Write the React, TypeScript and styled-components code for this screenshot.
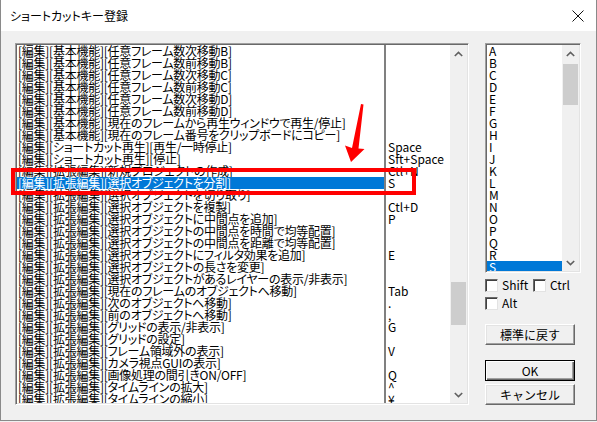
import React from 'react';
import styled, { createGlobalStyle } from 'styled-components';

const GlobalStyle = createGlobalStyle`
  html, body {
    margin: 0;
    padding: 0;
    background: #f0f0f0;
  }
  body {
    font-family: "Noto Sans CJK JP", "Liberation Sans", sans-serif;
    color: #000;
  }
`;

const shortcuts: [string, string][] = [
  ['[編集][基本機能][任意フレーム数次移動B]', ''],
  ['[編集][基本機能][任意フレーム数前移動B]', ''],
  ['[編集][基本機能][任意フレーム数次移動C]', ''],
  ['[編集][基本機能][任意フレーム数前移動C]', ''],
  ['[編集][基本機能][任意フレーム数次移動D]', ''],
  ['[編集][基本機能][任意フレーム数前移動D]', ''],
  ['[編集][基本機能][現在のフレームから再生ウィンドウで再生/停止]', ''],
  ['[編集][基本機能][現在のフレーム番号をクリップボードにコピー]', ''],
  ['[編集][ショートカット再生][再生/一時停止]', 'Space'],
  ['[編集][ショートカット再生][停止]', 'Sft+Space'],
  ['[編集][拡張編集][新規プロジェクトの作成]', 'Ctl+N'],
  ['[編集][拡張編集][選択オブジェクトを分割]', 'S'],
  ['[編集][拡張編集][選択オブジェクトを切り取り]', ''],
  ['[編集][拡張編集][選択オブジェクトを複製]', 'Ctl+D'],
  ['[編集][拡張編集][選択オブジェクトに中間点を追加]', 'P'],
  ['[編集][拡張編集][選択オブジェクトの中間点を時間で均等配置]', ''],
  ['[編集][拡張編集][選択オブジェクトの中間点を距離で均等配置]', ''],
  ['[編集][拡張編集][選択オブジェクトにフィルタ効果を追加]', 'E'],
  ['[編集][拡張編集][選択オブジェクトの長さを変更]', ''],
  ['[編集][拡張編集][選択オブジェクトがあるレイヤーの表示/非表示]', ''],
  ['[編集][拡張編集][現在のフレームのオブジェクトへ移動]', 'Tab'],
  ['[編集][拡張編集][次のオブジェクトへ移動]', '.'],
  ['[編集][拡張編集][前のオブジェクトへ移動]', ','],
  ['[編集][拡張編集][グリッドの表示/非表示]', 'G'],
  ['[編集][拡張編集][グリッドの設定]', ''],
  ['[編集][拡張編集][フレーム領域外の表示]', 'V'],
  ['[編集][拡張編集][カメラ視点GUIの表示]', ''],
  ['[編集][拡張編集][画像処理の間引きON/OFF]', 'Q'],
  ['[編集][拡張編集][タイムラインの拡大]', '^'],
  ['[編集][拡張編集][タイムラインの縮小]', '¥'],
];

const SELECTED_ROW = 11;
const letters = 'ABCDEFGHIJKLMNOPQRS'.split('');

const Chevron: React.FC<{ down?: boolean }> = ({ down }) => (
  <svg width="9" height="6" viewBox="0 0 9 6">
    <polyline
      points={down ? '0.8,1 4.5,4.6 8.2,1' : '0.8,5 4.5,1.4 8.2,5'}
      fill="none"
      stroke="#606060"
      strokeWidth="1.6"
    />
  </svg>
);

const App: React.FC = () => {
  return (
    <>
      <GlobalStyle />
      <Window>
        <TitleBar>
          <Title>ショートカットキー登録</Title>
          <CloseButton>
            <svg width="12" height="12" viewBox="0 0 12 12">
              <path d="M0.5 0.5 L11.5 11.5 M11.5 0.5 L0.5 11.5" stroke="#111" strokeWidth="1" />
            </svg>
          </CloseButton>
        </TitleBar>

        <Body>
          <ShortcutList>
            <ListRows>
              {shortcuts.map(([name, key], i) => (
                <ListRow key={i}>
                  <NameCell $selected={i === SELECTED_ROW}>{name}</NameCell>
                  <KeyCell>{key}</KeyCell>
                </ListRow>
              ))}
            </ListRows>
            <ScrollBar>
              <ScrollArrow>
                <Chevron />
              </ScrollArrow>
              <ScrollTrack>
                <ScrollThumb $top={220} $height={43} />
              </ScrollTrack>
              <ScrollArrow>
                <Chevron down />
              </ScrollArrow>
            </ScrollBar>
          </ShortcutList>

          <SidePanel>
            <KeyList>
              <KeyItems>
                {letters.map((l) => (
                  <KeyItem key={l} $selected={l === 'S'}>
                    {l}
                  </KeyItem>
                ))}
              </KeyItems>
              <ScrollBar>
                <ScrollArrow>
                  <Chevron />
                </ScrollArrow>
                <ScrollTrack>
                  <ScrollThumb $top={2} $height={41} />
                </ScrollTrack>
                <ScrollArrow>
                  <Chevron down />
                </ScrollArrow>
              </ScrollBar>
            </KeyList>

            <CheckRow>
              <CheckItem>
                <CheckBox />
                Shift
              </CheckItem>
              <CheckItem>
                <CheckBox />
                Ctrl
              </CheckItem>
            </CheckRow>
            <CheckRow>
              <CheckItem>
                <CheckBox />
                Alt
              </CheckItem>
            </CheckRow>

            <PushButton $gap={14}>標準に戻す</PushButton>
            <PushButton $gap={15} $default>
              OK
            </PushButton>
            <PushButton $gap={3}>キャンセル</PushButton>
          </SidePanel>
        </Body>

        <Highlight />
        <Arrow viewBox="340 100 30 70" width="30" height="70">
          <polygon points="360,104 362.5,104.5 357.5,148.5 363.5,149 350,162 344,145.5 351,148" fill="#ff0000" />
        </Arrow>
      </Window>
    </>
  );
};

const Window = styled.div`
  position: relative;
  width: 597px;
  height: 421px;
  box-sizing: border-box;
  background: #f0f0f0;
  border: 1px solid #8a8a8a;
  border-top: none;
  display: flex;
  flex-direction: column;
  overflow: hidden;
`;

const TitleBar = styled.div`
  height: 31px;
  flex-shrink: 0;
  background: #fff;
  display: flex;
  align-items: center;
  justify-content: space-between;
  padding-left: 9px;
`;

const Title = styled.span`
  font-size: 12px;
  font-feature-settings: 'palt';
  color: #000;
`;

const CloseButton = styled.div`
  width: 32px;
  height: 31px;
  display: flex;
  align-items: center;
  justify-content: center;
  margin-right: 2px;
`;

const Body = styled.div`
  flex: 1;
  display: flex;
  align-items: flex-start;
  gap: 16px;
  padding: 12px 0 0 14px;
`;

const sunken = `
  box-sizing: border-box;
  background: #fff;
  border: 1px solid;
  border-color: #a0a0a0 #fff #fff #a0a0a0;
  box-shadow: inset 1px 1px 0 #696969, inset -1px -1px 0 #e3e3e3;
  padding: 1px;
`;

const ShortcutList = styled.div`
  ${sunken}
  width: 454px;
  height: 362px;
  display: flex;
`;

const ListRows = styled.div`
  flex: 1;
  overflow: hidden;
  display: flex;
  flex-direction: column;
`;

const ListRow = styled.div`
  display: flex;
  height: 12px;
  flex-shrink: 0;
  font-size: 12px;
  line-height: 12px;
  font-feature-settings: 'palt';
  white-space: nowrap;
`;

const NameCell = styled.div<{ $selected?: boolean }>`
  width: 367px;
  flex-shrink: 0;
  padding-left: 1px;
  box-sizing: border-box;
  letter-spacing: -0.25px;
  background: ${(p) => (p.$selected ? '#0078d7' : 'transparent')};
  color: ${(p) => (p.$selected ? '#fff' : '#000')};
`;

const KeyCell = styled.div`
  flex: 1;
  border-left: 2px solid #808080;
  padding-left: 2px;
`;

const ScrollBar = styled.div`
  width: 17px;
  flex-shrink: 0;
  background: #f0f0f0;
  display: flex;
  flex-direction: column;
`;

const ScrollArrow = styled.div`
  height: 17px;
  flex-shrink: 0;
  display: flex;
  align-items: center;
  justify-content: center;
`;

const ScrollTrack = styled.div`
  flex: 1;
  display: flex;
  flex-direction: column;
  align-items: center;
`;

const ScrollThumb = styled.div<{ $top: number; $height: number }>`
  margin-top: ${(p) => p.$top}px;
  width: 15px;
  height: ${(p) => p.$height}px;
  background: #cdcdcd;
`;

const SidePanel = styled.div`
  width: 96px;
  display: flex;
  flex-direction: column;
`;

const KeyList = styled.div`
  ${sunken}
  width: 96px;
  height: 230px;
  display: flex;
`;

const KeyItems = styled.div`
  flex: 1;
  overflow: hidden;
  display: flex;
  flex-direction: column;
`;

const KeyItem = styled.div<{ $selected?: boolean }>`
  height: 12px;
  flex-shrink: 0;
  font-size: 12px;
  line-height: 12px;
  padding-left: 2px;
  background: ${(p) => (p.$selected ? '#0078d7' : 'transparent')};
  color: ${(p) => (p.$selected ? '#fff' : '#000')};
`;

const CheckRow = styled.div`
  display: flex;
  margin-top: 5px;
  height: 14px;
  & + & {
    margin-top: 4px;
  }
`;

const CheckItem = styled.label`
  width: 56px;
  display: flex;
  align-items: center;
  gap: 4px;
  font-size: 12px;
  line-height: 14px;
`;

const CheckBox = styled.span`
  width: 13px;
  height: 13px;
  box-sizing: border-box;
  background: #fff;
  border: 1px solid;
  border-color: #696969 #e3e3e3 #e3e3e3 #696969;
  box-shadow: inset 1px 1px 0 #404040;
  flex-shrink: 0;
`;

const PushButton = styled.div<{ $gap: number; $default?: boolean }>`
  margin-top: ${(p) => p.$gap}px;
  width: 90px;
  height: 21px;
  box-sizing: border-box;
  display: flex;
  align-items: center;
  justify-content: center;
  font-size: 12px;
  background: #f0f0f0;
  border: 1px solid;
  border-color: ${(p) => (p.$default ? '#000' : '#fff #696969 #696969 #fff')};
  box-shadow: ${(p) =>
    p.$default
      ? 'inset 1px 1px 0 #fff, inset -1px -1px 0 #696969, inset -2px -2px 0 #a0a0a0'
      : 'inset -1px -1px 0 #a0a0a0, inset 1px 1px 0 #e3e3e3'};
`;

const Highlight = styled.div`
  position: absolute;
  left: 10px;
  top: 168px;
  width: 405px;
  height: 27px;
  box-sizing: border-box;
  border: 4px solid #ff0000;
  pointer-events: none;
`;

const Arrow = styled.svg`
  position: absolute;
  left: 340px;
  top: 100px;
  pointer-events: none;
`;

export default App;
